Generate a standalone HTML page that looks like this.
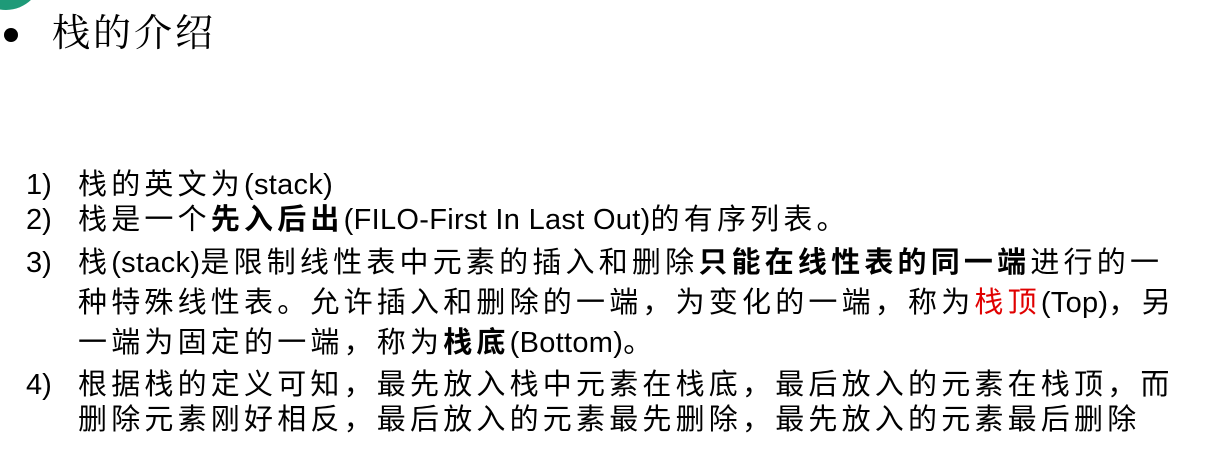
<!DOCTYPE html>
<html><head><meta charset="utf-8"><style>
body{margin:0;width:1220px;height:466px;background:#fff;overflow:hidden;position:relative;font-family:"Liberation Sans","Noto Sans CJK SC",sans-serif;color:#000}
.l{position:absolute;left:78px;font-size:29px;line-height:36px;white-space:nowrap;letter-spacing:4.2px}
.l i{font-style:normal;letter-spacing:0.3px;font-size:29px}
.n{position:absolute;left:26px;font-size:29px;line-height:36px}
b{font-weight:bold}
.r{color:#e00000}
</style></head><body>
<div style="position:absolute;left:-30px;top:-62px;width:72px;height:72px;border-radius:50%;background:#1e9a78"></div>
<div style="position:absolute;left:4px;top:28px;width:14px;height:14px;border-radius:50%;background:#000"></div>
<div style="position:absolute;left:52px;top:8px;font-size:38px;line-height:44px;font-family:'Noto Serif CJK SC',serif;letter-spacing:3px">栈的介绍</div>
<div class="n" style="top:167px">1)</div><div class="l" style="top:167px">栈的英文为<i>(stack)</i></div>
<div class="n" style="top:202px">2)</div><div class="l" style="top:202px">栈是一个<b>先入后出</b><i>(FILO-First In Last Out)</i>的有序列表。</div>
<div class="n" style="top:245px">3)</div><div class="l" style="top:245px">栈<i>(stack)</i>是限制线性表中元素的插入和删除<b>只能在线性表的同一端</b>进行的一</div>
<div class="l" style="top:285px">种特殊线性表。允许插入和删除的一端，为变化的一端，称为<span class="r">栈顶</span><i>(Top)</i>，另</div>
<div class="l" style="top:325px">一端为固定的一端，称为<b>栈底</b><i>(Bottom)</i>。</div>
<div class="n" style="top:367px">4)</div><div class="l" style="top:367px">根据栈的定义可知，最先放入栈中元素在栈底，最后放入的元素在栈顶，而</div>
<div class="l" style="top:402px">删除元素刚好相反，最后放入的元素最先删除，最先放入的元素最后删除</div>
</body></html>
